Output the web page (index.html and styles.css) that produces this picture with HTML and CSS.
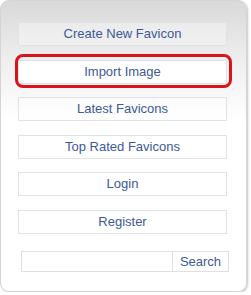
FILE: index.html
```html
<!DOCTYPE html>
<html lang="en">
<head>
    <meta charset="UTF-8">
    <title>Favicon menu</title>
    <link rel="stylesheet" href="styles.css">
</head>
<body>
    <div class="panel">
        <ul class="menu">
            <li><a href="#">Create New Favicon</a></li>
            <li class="marked"><a href="#">Import Image</a></li>
            <li><a href="#">Latest Favicons</a></li>
            <li><a href="#">Top Rated Favicons</a></li>
            <li><a href="#">Login</a></li>
            <li><a href="#">Register</a></li>
        </ul>
        <form class="search">
            <input type="text" class="search-box">
            <button type="button" class="search-button">Search</button>
        </form>
    </div>
</body>
</html>
```

FILE: styles.css
```css
body {
    margin: 0;
    font-family: "Liberation Sans", Arial, sans-serif;
    background-color: #fff;
}

.panel {
    width: 247px;
    height: 292px;
    border: 1px solid #d4d4d4;
    border-radius: 9px;
    background: linear-gradient(#d9d9d9, #f2f2f2 70px, #fff 120px);
    box-shadow: 1px 1px 2px #c8c8c8;
    padding-top: 21px;
    box-sizing: border-box;
}

.menu {
    list-style: none;
    margin: 0;
    padding: 0 19px 0 17px;
}

.menu li {
    position: relative;
    height: 24px;
    margin-bottom: 13.6px;
    border: 1px solid #dfe2e7;
    background-color: rgba(255, 255, 255, 0.35);
    box-sizing: border-box;
}

.menu a {
    display: block;
    line-height: 22px;
    text-align: center;
    font-size: 13px;
    color: #3b5998;
    text-decoration: none;
}

/* hand-drawn highlight round the chosen item */
.menu li.marked {
    background-color: #fff;
}

.menu li.marked::after {
    content: "";
    position: absolute;
    top: -7px;
    bottom: -5px;
    left: -4px;
    right: -6px;
    border: 3px solid #d9141c;
    border-radius: 8px;
}

.search {
    display: flex;
    margin: 17px 0 0 20px;
}

.search-box {
    width: 152px;
    height: 21px;
    margin: 0;
    padding: 0;
    border: 1px solid #dde0e4;
    box-sizing: border-box;
}

.search-button {
    width: 56px;
    height: 21px;
    margin: 0;
    padding: 0;
    border: 1px solid #dde0e4;
    border-left: none;
    background: #fff;
    font-family: inherit;
    font-size: 13px;
    color: #3b5998;
}
```
